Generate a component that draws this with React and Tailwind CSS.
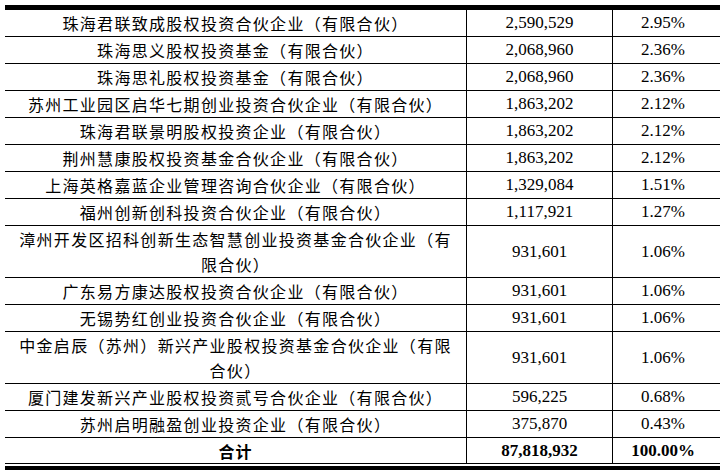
import React from 'react';

const ROWS = [
    { name: ['珠海君联致成股权投资合伙企业（有限合伙）'], shares: '2,590,529', ratio: '2.95%' },
    { name: ['珠海思义股权投资基金（有限合伙）'], shares: '2,068,960', ratio: '2.36%' },
    { name: ['珠海思礼股权投资基金（有限合伙）'], shares: '2,068,960', ratio: '2.36%' },
    { name: ['苏州工业园区启华七期创业投资合伙企业（有限合伙）'], shares: '1,863,202', ratio: '2.12%' },
    { name: ['珠海君联景明股权投资企业（有限合伙）'], shares: '1,863,202', ratio: '2.12%' },
    { name: ['荆州慧康股权投资基金合伙企业（有限合伙）'], shares: '1,863,202', ratio: '2.12%' },
    { name: ['上海英格嘉蓝企业管理咨询合伙企业（有限合伙）'], shares: '1,329,084', ratio: '1.51%' },
    { name: ['福州创新创科投资合伙企业（有限合伙）'], shares: '1,117,921', ratio: '1.27%' },
    { name: ['漳州开发区招科创新生态智慧创业投资基金合伙企业（有', '限合伙）'], shares: '931,601', ratio: '1.06%' },
    { name: ['广东易方康达股权投资合伙企业（有限合伙）'], shares: '931,601', ratio: '1.06%' },
    { name: ['无锡势红创业投资合伙企业（有限合伙）'], shares: '931,601', ratio: '1.06%' },
    { name: ['中金启辰（苏州）新兴产业股权投资基金合伙企业（有限', '合伙）'], shares: '931,601', ratio: '1.06%' },
    { name: ['厦门建发新兴产业股权投资贰号合伙企业（有限合伙）'], shares: '596,225', ratio: '0.68%' },
    { name: ['苏州启明融盈创业投资企业（有限合伙）'], shares: '375,870', ratio: '0.43%' },
];

const CJK = "font-['Noto_Sans_CJK_SC',sans-serif]";
const SERIF = "font-['Liberation_Serif','Times_New_Roman',serif]";

const Row = ({ row }) => {
    const tall = row.name.length > 1;
    return (
        <div className={`flex border-b border-black ${tall ? 'h-[52px]' : 'h-[27px]'}`}>
            <div className={`w-[462px] shrink-0 border-r border-black flex flex-col items-center justify-center px-[10px] text-[16px] leading-[25px] tracking-[1.3px] text-black ${CJK}`}>
                {row.name.map((line, i) => (
                    <span key={i} className="whitespace-nowrap">{line}</span>
                ))}
            </div>
            <div className={`w-[146px] shrink-0 border-r border-black flex items-center justify-center text-[17px] text-black ${SERIF}`}>
                {row.shares}
            </div>
            <div className={`flex-1 flex items-center justify-center pr-[7px] text-[17px] text-black ${SERIF}`}>
                {row.ratio}
            </div>
        </div>
    );
};

const App = () => (
    <div className="w-[720px] h-[473px] bg-white overflow-hidden pt-[5px] pl-[5px]">
        <div className="border-t-[5px] border-black">
            {ROWS.map((row, index) => (
                <Row key={index} row={row} />
            ))}
            <div className="flex h-[26px] border-b border-black">
                <div className={`w-[462px] shrink-0 border-r border-black flex items-center justify-center text-[16px] font-bold tracking-[1px] text-black ${CJK}`}>
                    合计
                </div>
                <div className={`w-[146px] shrink-0 border-r border-black flex items-center justify-center text-[17px] font-bold text-black ${SERIF}`}>
                    87,818,932
                </div>
                <div className={`flex-1 flex items-center justify-center pr-[7px] text-[17px] font-bold text-black ${SERIF}`}>
                    100.00%
                </div>
            </div>
            <div className="mt-[2px] h-[4px] bg-black" />
        </div>
    </div>
);

export default App;
